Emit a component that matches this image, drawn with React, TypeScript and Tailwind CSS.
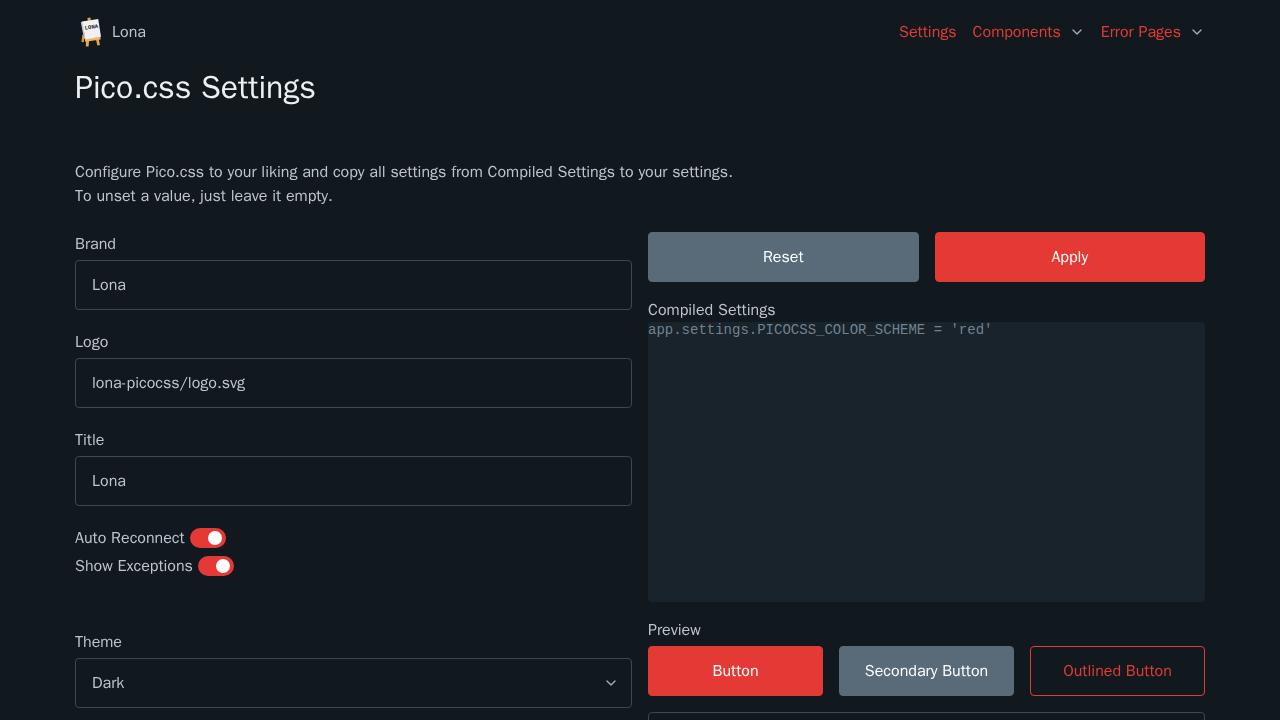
import { useId, useState } from "react";
import type { ReactNode } from "react";

function Logo() {
  return (
    <svg viewBox="0 0 32 32" className="size-8 shrink-0" aria-hidden="true">
      <path d="M12.4 2l3-.4.5 3-3 .4z" fill="#e2a03e" />
      <path d="M7.4 18.5l2 1.8-.6 6-2.4-.3z" fill="#d8963a" />
      <path d="M11 24l3.2-.4-.6 7H10.8z" fill="#e5a848" />
      <path d="M20.8 23l2.8-.5 1.4 6.5-2.6.6z" fill="#e5a848" />
      <path d="M9.8 23l15.6-2.4.2 2.8-15.4 2.4z" fill="#efb453" />
      <path d="M5.8 6.2l1.8-.8 3 18-1.6-1z" fill="#bfc1c6" />
      <path d="M7 5.4L23.2 2.9l2.8 17.8-15.6 2.9z" fill="#f1f1f3" />
      <text x="10" y="13.8" fontSize="5.6" fontWeight="700" fontFamily="Liberation Mono, monospace" fill="#222" transform="rotate(-9 10 13.8)">LONA</text>
    </svg>
  );
}

function Chevron({ className }: { className: string }) {
  return (
    <svg viewBox="0 0 24 24" className={className} fill="none" stroke="#a2afb9" strokeWidth="2" strokeLinecap="round" strokeLinejoin="round" aria-hidden="true">
      <polyline points="6 9 12 15 18 9" />
    </svg>
  );
}

function Field({ label, value }: { label: string; value: string }) {
  const id = useId();
  return (
    <div className="mb-5 flex flex-col">
      <label htmlFor={id} className="mb-1">{label}</label>
      <input id={id} defaultValue={value} className="h-[50px] w-full rounded border border-[#374956] bg-transparent px-4" />
    </div>
  );
}

function Toggle({ label }: { label: string }) {
  const [on, setOn] = useState(true);
  return (
    <label className="mb-1 flex w-fit items-center gap-[5px]">
      {label}
      <input
        type="checkbox"
        role="switch"
        checked={on}
        onChange={(e) => setOn(e.target.checked)}
        className="flex h-5 w-9 appearance-none items-center rounded-full bg-[#374956] px-1 before:size-3.5 before:rounded-full before:bg-white checked:justify-end checked:bg-[#e53935]"
      />
    </label>
  );
}

const tones = {
  primary: "border-[#e53935] bg-[#e53935] text-white",
  secondary: "border-[#596b78] bg-[#596b78] text-white",
  outline: "border-[#e53935] text-[#e53935]",
};

function Button({ tone, children }: { tone: keyof typeof tones; children: ReactNode }) {
  return (
    <button type="button" className={`h-[50px] min-w-0 flex-1 whitespace-nowrap rounded border ${tones[tone]}`}>
      {children}
    </button>
  );
}

export default function App() {
  return (
    <div className="min-h-screen bg-[#11191f] px-4 font-['WenQuanYi_Zen_Hei','Liberation_Sans',sans-serif] text-base text-[#bbc6ce]">
      <div className="mx-auto max-w-[1130px]">
        <nav className="flex h-16 items-center justify-between">
          <a href="#home" className="flex items-center gap-[5px]">
            <Logo />
            <span>Lona</span>
          </a>
          <ul className="flex items-center gap-4 text-[#e53935]">
            <li><a href="#settings">Settings</a></li>
            <li>
              <button type="button" className="flex items-center gap-2">
                Components
                <Chevron className="size-4" />
              </button>
            </li>
            <li>
              <button type="button" className="flex items-center gap-2">
                Error Pages
                <Chevron className="size-4" />
              </button>
            </li>
          </ul>
        </nav>
        <main>
          <h1 className="mb-12 text-[32px] leading-12 text-[#edf0f3]">Pico.css Settings</h1>
          <p className="mb-6">
            Configure Pico.css to your liking and copy all settings from Compiled Settings to your settings.
            <br />
            To unset a value, just leave it empty.
          </p>
          <div className="grid gap-4 md:grid-cols-2">
            <form>
              <Field label="Brand" value="Lona" />
              <Field label="Logo" value="lona-picocss/logo.svg" />
              <Field label="Title" value="Lona" />
              <Toggle label="Auto Reconnect" />
              <Toggle label="Show Exceptions" />
              <label htmlFor="theme" className="mt-13 mb-1 block">Theme</label>
              <div className="grid items-center">
                <select id="theme" defaultValue="Dark" className="col-start-1 row-start-1 h-[50px] w-full appearance-none rounded border border-[#374956] bg-[#11191f] px-4">
                  <option>Dark</option>
                  <option>Light</option>
                </select>
                <Chevron className="pointer-events-none col-start-1 row-start-1 mr-[13px] size-4 justify-self-end" />
              </div>
            </form>
            <section>
              <div className="mb-4 flex gap-4">
                <Button tone="secondary">Reset</Button>
                <Button tone="primary">Apply</Button>
              </div>
              <label htmlFor="compiled" className="block">Compiled Settings</label>
              <textarea
                id="compiled"
                readOnly
                defaultValue="app.settings.PICOCSS_COLOR_SCHEME = 'red'"
                className="mb-4 block h-[280px] w-full resize-none rounded bg-[#18232c] font-['Liberation_Mono',monospace] text-sm leading-4 text-[#73828c]"
              />
              <h2 className="mb-1">Preview</h2>
              <div className="mb-4 flex gap-4">
                <Button tone="primary">Button</Button>
                <Button tone="secondary">Secondary Button</Button>
                <Button tone="outline">Outlined Button</Button>
              </div>
              <input aria-label="Preview text" className="h-[50px] w-full rounded border border-[#374956] bg-transparent px-4" />
            </section>
          </div>
        </main>
      </div>
    </div>
  );
}
